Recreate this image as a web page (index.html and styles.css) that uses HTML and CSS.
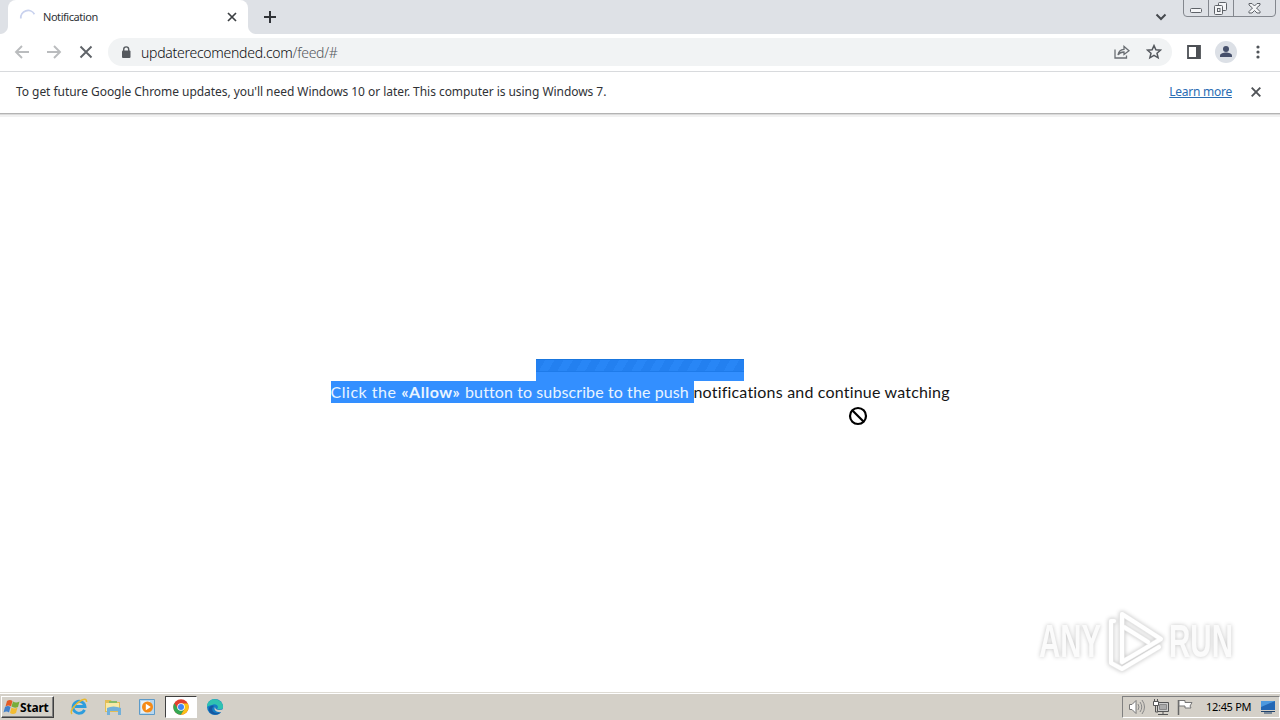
FILE: index.html
```
<!DOCTYPE html>
<html lang="en">
<head>
    <meta charset="UTF-8">
    <meta name="viewport" content="width=device-width, initial-scale=1.0">
    <title>Notification</title>

    <link rel="stylesheet" href="styles.css">
</head>
<body>
  <div class="tabstrip">
    <div class="strip-edge"></div>
    <div class="tab">
      <svg class="spinner" width="18" height="18" viewBox="0 0 18 18"><path d="M1.8 10.5A7.3 7.3 0 0 1 15.4 6.2" fill="none" stroke="#c9d2ee" stroke-width="1.8"/></svg>
      <span class="tab-title">Notification</span>
      <svg width="10" height="10" viewBox="0 0 10 10"><path d="M1 1l8 8M9 1L1 9" stroke="#3c4043" stroke-width="1.7"/></svg>
    </div>
    <div class="strip-corner"></div>
    <svg class="new-tab" width="12" height="12" viewBox="0 0 12 12"><path d="M6 0v12M0 6h12" stroke="#303338" stroke-width="2"/></svg>
    <svg class="tab-search" width="12" height="8" viewBox="0 0 12 8"><path d="M1.5 1.5L6 6l4.500-4.500" fill="none" stroke="#45494e" stroke-width="2"/></svg>
    <svg class="window-buttons" width="94" height="17" viewBox="0 0 94 17">
      <path d="M.5 0v13q0 3.500 3.500 3.500h85q3.500 0 3.500-3.500V0M25.500 0v16M50.500 0v16" fill="none" stroke="#83878e"/>
      <g fill="#f4f5f7" stroke="#5e6268">
        <rect x="7.500" y="8.500" width="11" height="4" rx="1"/>
        <rect x="35.500" y="2.500" width="8" height="8" rx="1"/>
        <rect x="31.500" y="5.500" width="8" height="9" rx="1"/>
        <rect x="34.500" y="8.500" width="2.500" height="3"/>
        <path d="M66 3.500h3l2.500 2.500L74 3.500h3v1.500l-3.500 3 3.500 3.500v1.500h-3l-2.500-2.500L69 13h-3v-1.500l3.500-3.500L66 5z"/>
      </g>
    </svg>
  </div>

  <div class="toolbar">
    <div class="nav">
      <svg width="16" height="14" viewBox="0 0 16 14"><path d="M15 7H2M8 1L2 7l6 6" fill="none" stroke="#babcbe" stroke-width="1.900"/></svg>
      <svg width="16" height="14" viewBox="0 0 16 14"><path d="M1 7h13M8 1l6 6-6 6" fill="none" stroke="#babcbe" stroke-width="1.900"/></svg>
      <svg width="16" height="14" viewBox="0 0 16 14"><path d="M2.500 1.500l11 11M13.500 1.500l-11 11" stroke="#5f6368" stroke-width="1.900"/></svg>
    </div>
    <div class="omnibox">
      <svg class="lock" width="10" height="13" viewBox="0 0 10 13"><rect x="1" y="4.500" width="8.500" height="7.500" rx="1" fill="#55595e"/><path d="M2.700 5V3.400a2.500 2.500 0 0 1 5 0V5" fill="none" stroke="#55595e" stroke-width="1.400"/></svg>
      <span class="url">updaterecomended.com<span class="path">/feed/#</span></span>
      <svg class="share" width="16" height="14" viewBox="0 0 16 14"><path d="M1 4.500V13h11.500v-2.500M4 10c.5-4 2.500-5.500 6-5.700V1.500L15 5.700 10 9.500V7C7.500 7 5.500 7.700 4 10z" fill="none" stroke="#6a6e73" stroke-width="1.300"/></svg>
      <svg width="16" height="16" viewBox="0 0 16 16"><path d="M8 1.600l1.900 4.200 4.600.4L11 9.300l1.100 4.500L8 11.400l-4.100 2.400L5 9.300 1.500 6.200l4.600-.4z" fill="none" stroke="#54585d" stroke-width="1.500"/></svg>
    </div>
    <svg class="side-panel" width="14" height="14" viewBox="0 0 14 14"><path d="M1 1h12v12H1z" fill="none" stroke="#4d5055" stroke-width="1.800"/><path d="M9 1h4v12H9z" fill="#4d5055"/></svg>
    <svg class="profile" width="22" height="22" viewBox="0 0 22 22"><circle cx="11" cy="11" r="11" fill="#dce0e6"/><circle cx="11" cy="8" r="3" fill="#46506b"/><path d="M5 16v-1.500c0-2 3.500-3 6-3s6 1 6 3V16z" fill="#46506b"/></svg>
    <svg class="menu" width="4" height="14" viewBox="0 0 4 14"><g fill="#505459"><circle cx="2" cy="2" r="1.600"/><circle cx="2" cy="7" r="1.600"/><circle cx="2" cy="12" r="1.600"/></g></svg>
  </div>

  <div class="infobar">
    <span class="message">To get future Google Chrome updates, you'll need Windows 10 or later. This computer is using Windows 7.</span>
    <a class="learn" href="#">Learn more</a>
    <svg width="10" height="10" viewBox="0 0 10 10"><path d="M.7.7l8.600 8.600M9.300.7L.7 9.300" stroke="#505357" stroke-width="1.900"/></svg>
  </div>

  <div class="page">
    <div class="loader"><div class="stripes"></div></div>
    <p class="prompt"><span class="selected"><span class="lead">Click the <b>«Allow»</b> </span>button to subscribe to the push </span><span class="rest">notifications and continue watching</span></p>
    <svg class="cursor" width="20" height="20" viewBox="0 0 20 20"><circle cx="10" cy="10" r="8" fill="#fff" stroke="#000" stroke-width="2.200"/><path d="M4.500 4.500l11 11" stroke="#000" stroke-width="2.200"/></svg>
    <svg class="watermark" width="204" height="72" viewBox="0 0 204 72">
      <text x="5" y="51" textLength="62" lengthAdjust="spacingAndGlyphs">ANY</text>
      <g fill="none" stroke-linejoin="round" stroke-linecap="round">
        <path class="mark-edge" d="M88 55V8l39 25-39 23M80 15h-3v42l11 6 37-22M90 21l24 15"/>
        <path class="mark" d="M88 55V8l39 25-39 23M80 15h-3v42l11 6 37-22M90 21l24 15"/>
      </g>
      <text x="135" y="51" textLength="64" lengthAdjust="spacingAndGlyphs">RUN</text>
    </svg>
  </div>

  <div class="taskbar">
    <div class="start">
      <svg width="17" height="16" viewBox="0 0 17 16"><path d="M4 2q3-2 5.500 0L8 7.500q-2.500-2-5.500 0z" fill="#e45b25"/><path d="M10 2.500q3 2 6.500 0L15 8q-3.500 1.500-6.500-.5z" fill="#78ad3a"/><path d="M2 8q3-2 5.500 0L6 13.500q-2.500-2-5.500 0z" fill="#4381ca"/><path d="M8.500 8.500q3 2 6 0L13 14q-3 2-6 0z" fill="#f3bc32"/></svg>
      <b>Start</b>
    </div>
    <div class="launch">
      <svg width="18" height="18" viewBox="0 0 18 18"><path d="M14.500 11.800A6 6 0 1 1 15 8.500H5" fill="none" stroke="#2d9ddd" stroke-width="2.800"/><path d="M2 16C-1 13 6 5 12 2q5-2 4.500 2" fill="none" stroke="#e8b92f" stroke-width="1.500"/></svg>
    </div>
    <div class="launch">
      <svg width="18" height="18" viewBox="0 0 18 18"><path d="M1 2h6l1 2h8v10H1z" fill="#e3bd55"/><path d="M2 5h13v8H2z" fill="#f8e9a5"/><path d="M5 3h8v2H5z" fill="#86bb69"/><path d="M3 10q6-3 14 0v7h-3v-4H6v4H3z" fill="#72b0d9"/></svg>
    </div>
    <div class="launch">
      <svg width="18" height="18" viewBox="0 0 18 18"><path d="M1.500 1.500h15v15h-15z" fill="#b8d7ef" stroke="#5d9bc9"/><path d="M3 3h9v12H3z" fill="#e5eff6"/><circle cx="9.500" cy="9" r="5.500" fill="#f58a16"/><path d="M7.800 5.700v6.600l5-3.300z" fill="#fff"/></svg>
    </div>
    <div class="launch active">
      <svg width="16" height="16" viewBox="0 0 16 16"><circle cx="8" cy="8" r="7.700" fill="#e3402f"/><path d="M1.300 4.200A7.700 7.700 0 0 0 8 15.700l3.500-5.700H5z" fill="#34a853"/><path d="M8 15.700A7.700 7.700 0 0 0 14.800 4.500H8l3.500 5.500z" fill="#fbc116"/><circle cx="8" cy="8" r="3.800" fill="#fff"/><circle cx="8" cy="8" r="3" fill="#4285f4"/></svg>
    </div>
    <div class="launch">
      <svg width="18" height="18" viewBox="0 0 18 18"><circle cx="9" cy="9" r="8" fill="#147dc5"/><path d="M1 9c0-10 14-10 16-1 .5 3-2 4-6 3 3-3-2-6-5-4-2 0-4 1-5 2z" fill="#2fc2b1"/><path d="M7 9c-3 4 3 8 8 5-4 5-14 2-12-4 1-2 3-3 5-2z" fill="#1558a2"/><path d="M9 9c0 3 4 4 9 2l-2 3C11 15 7 12 9 9z" fill="#d4d0c8"/></svg>
    </div>
    <div class="tray">
      <svg width="18" height="18" viewBox="0 0 18 18"><path d="M1.500 6.500H4l4-4v13l-4-4H1.500z" fill="#fff" stroke="#777"/><path d="M10 6q2 3 0 6M12 4q3.500 5 0 10M14 2q5 7 0 14" fill="none" stroke="#888"/></svg>
      <svg width="18" height="18" viewBox="0 0 18 18"><path d="M5.500 4.500h11v9h-11z" fill="#ccc" stroke="#555"/><path d="M7.500 6.500h7v5h-7z" fill="#aaa" stroke="#888"/><path d="M11 14v2M6 16.500h10M3.500 7v7H6" fill="none" stroke="#555"/><path d="M1.500 3.500h5v4h-5zM2.500 1v2M5.500 1v2" fill="#fff" stroke="#555"/></svg>
      <svg width="18" height="18" viewBox="0 0 18 18"><path d="M2.500 2v15" stroke="#666" stroke-width="1.500"/><path d="M3 2.500h6v2h7l-2 3.500 1 2H9v-2H3z" fill="#fff" stroke="#777"/></svg>
      <span class="clock">12:45 PM</span>
      <svg width="16" height="14" viewBox="0 0 16 14"><path d="M1 1h14v9H1z" fill="#2367b5"/><path d="M1 1h14L1 7z" fill="#4d99df"/><path d="M1 11.500h14M4 13h8" stroke="#20436b"/></svg>
    </div>
  </div>
</body>
</html>
```
FILE: styles.css
```
*{
  margin: 0;
  padding: 0;
  box-sizing: border-box;
}

body{
  width: 1280px;
  height: 720px;
  display: flex;
  flex-direction: column;
  overflow: hidden;
  background-color: white;
  color: #303236;
  font-family: "Noto Sans", sans-serif;
}

svg{
  display: block;
  flex: none;
}

span, a{
  white-space: nowrap;
}

.tabstrip{
  height: 34px;
  flex: none;
  display: flex;
  align-items: center;
  background-color: #dee1e6;
}

.strip-edge{
  width: 8px;
  height: 8px;
  align-self: flex-end;
  background: radial-gradient(circle at 0 0, #dee1e6 7.5px, white 8.5px);
}

.strip-corner{
  width: 8px;
  height: 8px;
  align-self: flex-end;
  background: radial-gradient(circle at 8px 0, #dee1e6 7.5px, white 8.5px);
}

.tab{
  width: 240px;
  height: 34px;
  display: flex;
  align-items: center;
  padding: 0 11px;
  background-color: white;
  border-radius: 8px 8px 0 0;
}

.tab-title{
  width: 179px;
  margin: -2px 5px 0 6px;
  font-size: 11px;
  letter-spacing: -0.45px;
}

.new-tab{
  margin-left: 8px;
}

.tab-search{
  margin-left: 879px;
}

.window-buttons{
  align-self: flex-start;
  margin-left: 16px;
}

.toolbar{
  height: 38px;
  flex: none;
  display: flex;
  align-items: center;
  padding-bottom: 1px;
  border-bottom: 1px solid #d8dadd;
}

.nav{
  display: flex;
  gap: 16px;
  margin-left: 14px;
}

.omnibox{
  width: 1064px;
  height: 28px;
  display: flex;
  align-items: center;
  margin-left: 14px;
  padding: 0 10px 0 13px;
  border-radius: 14px;
  background-color: #f1f3f4;
}

.url{
  margin-left: 10px;
  font-size: 14px;
  font-weight: 300;
  letter-spacing: -0.27px;
  color: #0c0d0f;
}

.path{
  color: #54585d;
}

.share{
  margin: 0 16px 0 auto;
}

.side-panel{
  margin-left: 15px;
}

.profile{
  margin-left: 14px;
}

.menu{
  margin-left: 19px;
}

.infobar{
  height: 41px;
  flex: none;
  display: flex;
  align-items: center;
  padding: 0 19px 2px 16px;
  font-size: 12px;
}

.message{
  letter-spacing: -0.05px;
}

.learn{
  margin: 0 19px 0 auto;
  letter-spacing: -0.25px;
  color: #2a6db3;
}

.page{
  flex: 1;
  position: relative;
  display: flex;
  flex-direction: column;
  align-items: center;
  padding-top: 246px;
  background: linear-gradient(#b3b3b3 0 1px, #dadada 1px 2px, #f1f1f1 2px 4px, white 4px);
}

.loader{
  width: 208px;
  height: 22px;
  flex: none;
  background-color: #338fff;
}

.stripes{
  height: 13px;
  border-top: 1px solid #1976de;
  border-bottom: 1px solid #1e7bea;
  background: repeating-linear-gradient(120deg, #2380f0 0 8px, #2886f6 8px 16px);
}

.prompt{
  display: flex;
  height: 22px;
  font-family: Lato, sans-serif;
  font-size: 16px;
  line-height: 22px;
  letter-spacing: 0.1px;
  font-variant-ligatures: none;
  color: #151515;
}

.selected{
  width: 363px;
  white-space: pre;
  background-color: #338fff;
  color: #e8f4ff;
}

.lead{
  white-space: pre;
  letter-spacing: 0.53px;
}

.rest{
  width: 256px;
  letter-spacing: 0.19px;
}

.cursor{
  position: absolute;
  left: 848px;
  top: 293px;
}

.watermark{
  position: absolute;
  left: 1034px;
  top: 493px;
  overflow: visible;
  filter: drop-shadow(0 0 2px #c4c4c4);
}

.watermark text{
  fill: #fbfbfb;
  font-family: "Liberation Sans", sans-serif;
  font-size: 47px;
  font-weight: bold;
}

.mark-edge{
  stroke: #e9e9e9;
  stroke-width: 5.5px;
}

.mark{
  stroke: white;
  stroke-width: 4px;
}

.taskbar{
  height: 28px;
  flex: none;
  display: flex;
  align-items: center;
  background-color: #d4d0c8;
  border-top: 1px solid #dedbd4;
  box-shadow: inset 0 1px white;
}

.start{
  width: 53px;
  height: 22px;
  display: flex;
  align-items: center;
  margin: 1px 9px 0 1px;
  padding-left: 1px;
  border: 1px solid;
  border-color: white #404040 #404040 white;
  box-shadow: inset -1px -1px #808080;
  font-size: 12px;
  letter-spacing: -0.2px;
  color: black;
}

.launch{
  width: 32px;
  height: 22px;
  display: flex;
  align-items: center;
  justify-content: center;
  margin: 1px 2px 0 0;
}

.active{
  background-color: white;
  border: 1px solid;
  border-color: #404040 white white #404040;
}

.tray{
  width: 158px;
  height: 22px;
  display: flex;
  align-items: center;
  gap: 6px;
  margin: 0 0 0 auto;
  padding-left: 5px;
  border: 1px solid;
  border-color: #808080 white white #808080;
  font-size: 11px;
  color: black;
}

.clock{
  width: 48px;
  margin-left: 6px;
  letter-spacing: -0.3px;
}
```
